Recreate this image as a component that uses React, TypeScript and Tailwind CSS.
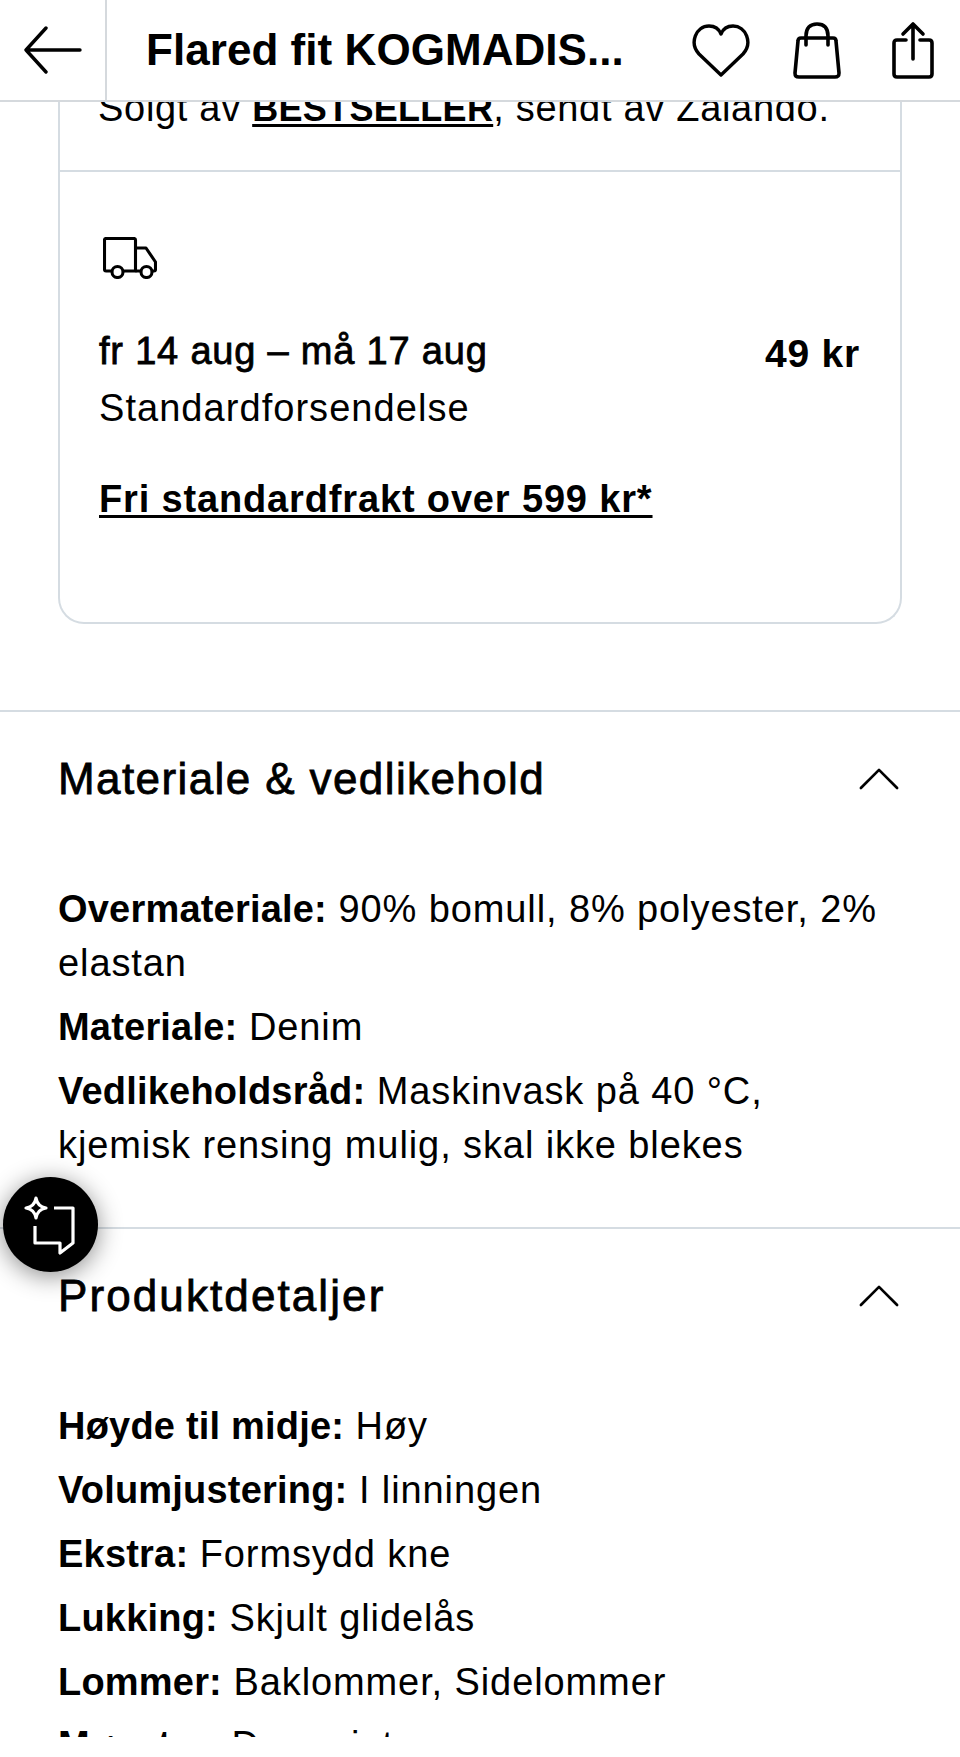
const font = "font-['Liberation_Sans',Arial,sans-serif]";

function Spec({ label, value }: { label: string; value: string }) {
  return (
    <p className="text-[38px] leading-[54px] mb-[9.8px] tracking-[0.9px]">
      <b className="font-bold tracking-[0.2px]">{label}</b> {value}
    </p>
  );
}

function SectionHead({ title, titleClass }: { title: string; titleClass: string }) {
  return (
    <div className="flex items-center justify-between h-[133px] pl-[58px] pr-[61px]">
      <h2 className={`text-[44px] font-medium [-webkit-text-stroke:0.8px_#000] ${titleClass}`}>{title}</h2>
      <svg width="40" height="23" viewBox="0 0 42 24" fill="none" stroke="#000" strokeWidth="2.8" strokeLinecap="round" strokeLinejoin="round">
        <path d="M2 22 21 3l19 19" />
      </svg>
    </div>
  );
}

export default function App() {
  return (
    <div className={`relative w-[960px] h-[1757px] overflow-hidden bg-white text-black ${font}`}>
      <header className="relative z-10 flex items-center h-[102px] bg-white border-b-2 border-[#d5d9dd]">
        <div className="flex items-center justify-center w-[107px] h-full border-r-2 border-[#d5d9dd]">
          <svg width="60" height="48" viewBox="0 0 60 48" fill="none" stroke="#000" strokeWidth="3.4" strokeLinecap="round" strokeLinejoin="round">
            <path d="M57 24H3M23 2 3 24l20 22" />
          </svg>
        </div>
        <div className="flex-1 pl-[39px] text-[44px] font-bold tracking-[0.05px] leading-none">Flared fit KOGMADIS...</div>
        <div className="flex items-center pr-[26px]">
          <svg className="mr-[42px]" width="58" height="54" viewBox="0 0 58 54" fill="none" stroke="#000" strokeWidth="3.4" strokeLinejoin="round">
            <path d="M29 52 7 31C-3 20 4 3 17 3c6 0 10 3 12 8 2-5 6-8 12-8 13 0 20 17 10 28Z" />
          </svg>
          <svg className="mr-[50px]" width="50" height="58" viewBox="0 0 50 58" fill="none" stroke="#000" strokeWidth="3.6" strokeLinecap="round" strokeLinejoin="round">
            <path d="M9 17h32c2 0 3 1 3 3l3 32c0 3-1 4-4 4H7c-3 0-4-1-4-4l3-32c0-2 1-3 3-3Z" />
            <path d="M14 24V15C14 7 18 3 25 3s11 4 11 12v9" />
          </svg>
          <svg width="42" height="58" viewBox="0 0 42 58" fill="none" stroke="#000" strokeWidth="3.6" strokeLinecap="round" strokeLinejoin="round">
            <path d="M14 19H5c-2 0-3 1-3 3v31c0 2 1 3 3 3h32c2 0 3-1 3-3V22c0-2-1-3-3-3h-9" />
            <path d="M21 38V3M11 13 21 3l10 10" />
          </svg>
        </div>
      </header>

      <main className="-mt-[40px] h-[1675px] overflow-hidden">
        <section className="mx-[58px] h-[562px] border-2 border-t-0 border-[#d5dce2] rounded-b-[26px]">
          <div className="h-[110px] pl-[38px] pt-[25px] text-[38px] leading-[42px] tracking-[0.7px] border-b-2 border-[#d5dce2]">
            Solgt av <b className="text-[36px] tracking-[0.3px] underline underline-offset-[3px] decoration-[3px]">BESTSELLER</b>, sendt av Zalando.
          </div>
          <div className="pl-[39px] pr-[40px]">
            <svg className="mt-[65px] ml-[4px] block" width="54" height="42" viewBox="0 0 54 42" fill="none" stroke="#000" strokeWidth="3.1" strokeLinejoin="round">
              <path d="M9 34H3c-1 0-1.500-.5-1.500-1.500V3C1.500 2 2 1.500 3 1.500h28c1 0 1.500.5 1.500 1.500v31H20" />
              <path d="M32.500 11H43l9.500 14v7.500c0 1-.5 1.500-1.500 1.500h-2M38 34h-5.500" />
              <circle cx="14.500" cy="35" r="5.500" />
              <circle cx="43.500" cy="35" r="5.500" />
            </svg>
            <div className="flex items-start justify-between mt-[51px]">
              <div>
                <div className="text-[38px] font-medium leading-[42px] tracking-[0.8px] [-webkit-text-stroke:0.8px_#000]">fr 14 aug – må 17 aug</div>
                <div className="text-[38px] leading-[42px] tracking-[1.05px] mt-[15px]">Standardforsendelse</div>
              </div>
              <div className="text-[39px] font-bold leading-[42px] mt-[3px] tracking-[0.8px]">49 kr</div>
            </div>
            <div className="mt-[49px] text-[38px] font-bold leading-[42px] tracking-[0.85px] underline underline-offset-[3px] decoration-[3px]">Fri standardfrakt over 599 kr*</div>
          </div>
        </section>

        <div className="mt-[86px] border-t-2 border-[#d5dce2]">
          <SectionHead title="Materiale & vedlikehold" titleClass="tracking-[1.4px]" />
          <div className="px-[58px] pt-[37px] pb-[46px]">
            <Spec label="Overmateriale:" value="90% bomull, 8% polyester, 2% elastan" />
            <Spec label="Materiale:" value="Denim" />
            <Spec label="Vedlikeholdsråd:" value="Maskinvask på 40 °C, kjemisk rensing mulig, skal ikke blekes" />
          </div>
        </div>

        <div className="border-t-2 border-[#d5dce2]">
          <SectionHead title="Produktdetaljer" titleClass="tracking-[2.1px]" />
          <div className="px-[58px] pt-[37px]">
            <Spec label="Høyde til midje:" value="Høy" />
            <Spec label="Volumjustering:" value="I linningen" />
            <Spec label="Ekstra:" value="Formsydd kne" />
            <Spec label="Lukking:" value="Skjult glidelås" />
            <Spec label="Lommer:" value="Baklommer, Sidelommer" />
            <Spec label="Mønster:" value="Dyreprint" />
          </div>
        </div>
      </main>

      <button className="absolute left-[3px] top-[1177px] z-20 flex items-center justify-center w-[95px] h-[95px] rounded-full bg-black shadow-[0_4px_24px_rgba(0,0,0,0.45)]">
        <svg width="56" height="60" viewBox="0 0 56 60" fill="none" stroke="#fff" strokeWidth="3.2" strokeLinejoin="round">
          <path d="M31 13h19v35L37 58V48H12V31" />
          <path d="M13 3c1 6 4 9 10 10-6 1-9 4-10 10-1-6-4-9-10-10 6-1 9-4 10-10Z" />
        </svg>
      </button>
    </div>
  );
}
